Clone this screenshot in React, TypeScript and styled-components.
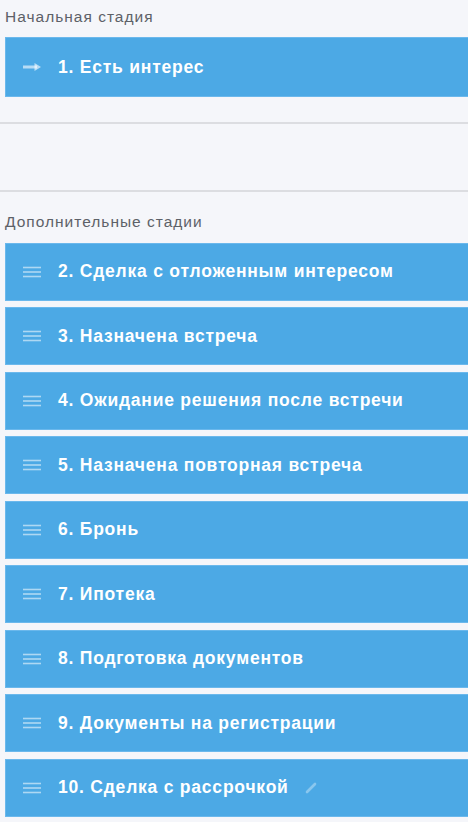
import React from "react";
import styled, { createGlobalStyle } from "styled-components";

const Global = createGlobalStyle`
  html, body { margin: 0; padding: 0; background: #f5f6fa; }
  body { font-family: "Liberation Sans", Arial, sans-serif; }
`;

const Page = styled.div`
  width: 468px;
  min-height: 822px;
  background: #f5f6fa;
  display: flex;
  flex-direction: column;
`;

const SectionTitle = styled.div<{ $top: number }>`
  padding: ${(p) => p.$top}px 0 0 5px;
  height: 37px;
  box-sizing: border-box;
  font-size: 15.5px;
  letter-spacing: 1px;
  color: #5d6168;
  line-height: 18px;
`;

const Divider = styled.div`
  height: 1.5px;
  background: #dcdde1;
`;

const Spacer = styled.div<{ $h: number }>`
  height: ${(p) => p.$h}px;
`;

const List = styled.div`
  display: flex;
  flex-direction: column;
  gap: 6.5px;
`;

const Card = styled.div<{ $h: number }>`
  margin-left: 5px;
  height: ${(p) => p.$h}px;
  box-sizing: border-box;
  background: #4ca9e5;
  border: 1px solid #6bb8ec;
  border-right: none;
  display: flex;
  align-items: center;
  padding-left: 16px;
  color: #fff;
  font-weight: bold;
  font-size: 17.5px;
  letter-spacing: 0.78px;
`;

const IconBox = styled.div`
  width: 20px;
  height: 14px;
  margin-right: 16px;
  display: flex;
  align-items: center;
  justify-content: center;
`;

const Label = styled.span`
  white-space: nowrap;
`;

const Pencil = styled.span`
  margin-left: 16px;
  display: inline-flex;
  align-items: center;
`;

const Hamburger = () => (
  <svg width="20" height="14" viewBox="0 0 20 14">
    <g stroke="rgba(255,255,255,0.55)" strokeWidth="1.6">
      <line x1="1" y1="2.5" x2="19" y2="2.5" />
      <line x1="1" y1="7" x2="19" y2="7" />
      <line x1="1" y1="11.5" x2="19" y2="11.5" />
    </g>
  </svg>
);

const Arrow = () => (
  <svg width="20" height="14" viewBox="0 0 20 14">
    <line x1="1" y1="7" x2="15" y2="7" stroke="rgba(255,255,255,0.6)" strokeWidth="3" />
    <path d="M12.5 3 L19 7 L12.5 11 Z" fill="rgba(255,255,255,0.6)" />
  </svg>
);

const PencilIcon = () => (
  <svg width="12" height="12" viewBox="0 0 12 12">
    <line x1="2" y1="10" x2="10" y2="2" stroke="rgba(255,255,255,0.35)" strokeWidth="2.6" strokeLinecap="round" />
  </svg>
);

const stages = [
  "2. Сделка с отложенным интересом",
  "3. Назначена встреча",
  "4. Ожидание решения после встречи",
  "5. Назначена повторная встреча",
  "6. Бронь",
  "7. Ипотека",
  "8. Подготовка документов",
  "9. Документы на регистрации",
  "10. Сделка с рассрочкой",
];

export default function App() {
  return (
    <Page>
      <Global />
      <SectionTitle $top={8}>Начальная стадия</SectionTitle>
      <Card $h={60}>
        <IconBox>
          <Arrow />
        </IconBox>
        <Label>1. Есть интерес</Label>
      </Card>
      <Spacer $h={25} />
      <Divider />
      <Spacer $h={66.5} />
      <Divider />
      <SectionTitle $top={21}>Дополнительные стадии</SectionTitle>
      <Spacer $h={14} />
      <List>
        {stages.map((s, i) => (
          <Card key={s} $h={58}>
            <IconBox>
              <Hamburger />
            </IconBox>
            <Label>{s}</Label>
            {i === stages.length - 1 && (
              <Pencil>
                <PencilIcon />
              </Pencil>
            )}
          </Card>
        ))}
      </List>
    </Page>
  );
}
